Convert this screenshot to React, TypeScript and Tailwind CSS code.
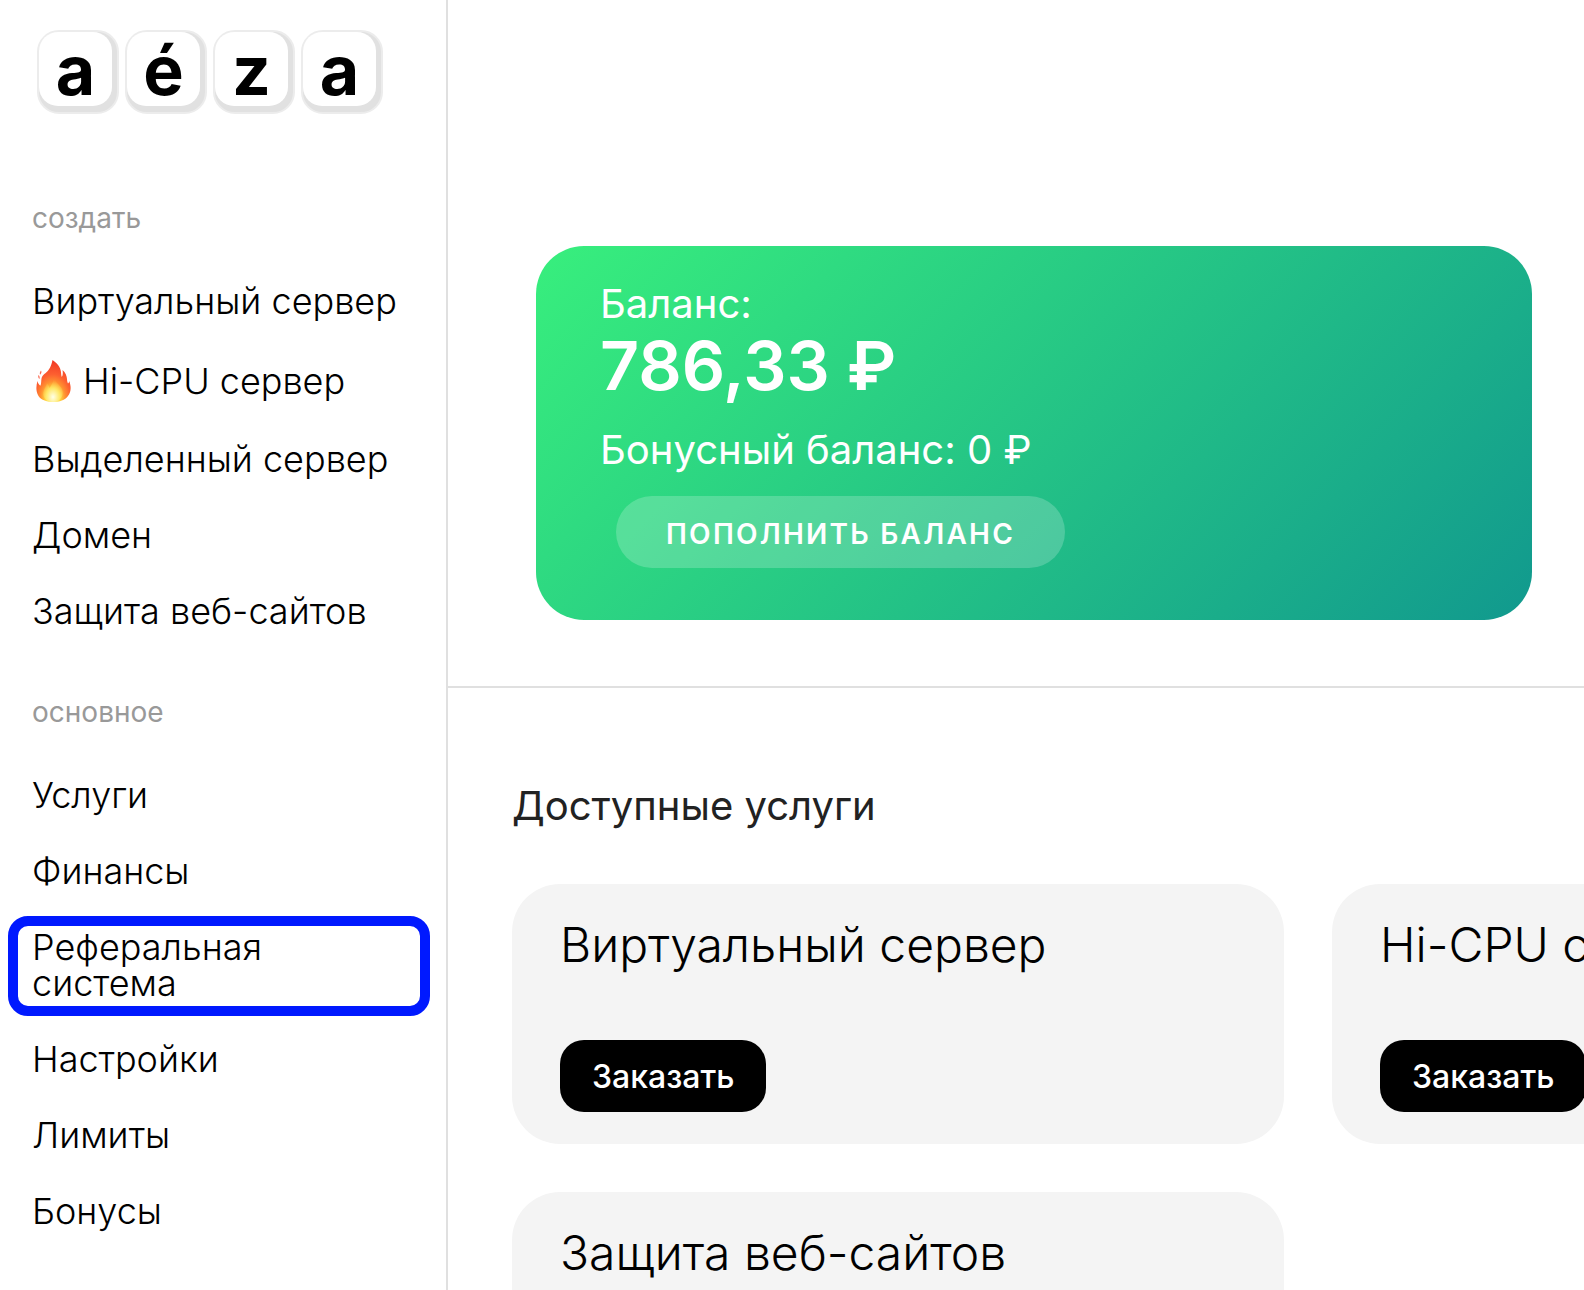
const createLinks = [
    { title: "Виртуальный сервер" },
    { title: "Hi-CPU сервер", hot: true },
    { title: "Выделенный сервер" },
    { title: "Домен" },
    { title: "Защита веб-сайтов" },
];

const services = ["Виртуальный сервер", "Hi-CPU сервер", "Защита веб-сайтов"];

function Logo() {
    return (
        <a href="#" className="flex gap-[6px] ml-[5px]">
            {["a", "é", "z", "a"].map((letter, i) => (
                <span
                    key={i}
                    className="w-[82px] h-[84px] rounded-[22px] border-2 border-[#ececec] bg-[#e1e1e1]"
                >
                    <span className="flex items-center justify-center w-[73px] h-[74px] rounded-[19px] bg-white pt-[2px] text-[68px] leading-[72px] font-bold">
                        {letter}
                    </span>
                </span>
            ))}
        </a>
    );
}

function Fire() {
    return (
        <svg
            viewBox="0 0 35 42"
            className="w-[35px] h-[42px] mt-px ml-1 mr-3 shrink-0"
            aria-hidden="true"
        >
            <defs>
                <radialGradient
                    id="flame"
                    gradientUnits="userSpaceOnUse"
                    cx="17"
                    cy="38"
                    r="36"
                    gradientTransform="translate(4 0) scale(.76 1)"
                >
                    <stop offset="0" stopColor="#fffde0" />
                    <stop offset=".12" stopColor="#fff59a" />
                    <stop offset=".28" stopColor="#ffd23c" />
                    <stop offset=".45" stopColor="#ff9030" />
                    <stop offset=".66" stopColor="#fd5f30" />
                    <stop offset="1" stopColor="#f23c26" />
                </radialGradient>
                <radialGradient id="core" cx=".5" cy=".8" r=".7">
                    <stop offset="0" stopColor="#ffffe8" />
                    <stop offset=".5" stopColor="#ffe868" />
                    <stop offset="1" stopColor="#ffb040" stopOpacity="0" />
                </radialGradient>
            </defs>
            <path
                fill="url(#flame)"
                d="M16.5 0C21 3 24.5 7 25 12c.2 2 .2 3.500 .8 5C27 15 27 12.500 26.500 10c3 2.500 4.300 6 4.500 9 .1 2 .4 3.400 1 4.500.8-.6 1.100-1.400 1.200-2.500C35.500 27 35 32 32 36c-3 4-8.500 6-14.500 6S5 40 2.500 36C-.3 31.500 0 26 1.500 21c.5 2 1.300 3.500 2.800 4.800 1.200-2 .7-4.800 1.200-7.300C6.300 14.500 10 13.500 12.500 10c2.300-3.200 3.200-6 4-10Z"
            />
            <path
                fill="url(#core)"
                d="M18 17c1 5 6 8 8 12 2.500 5.500-1 13-9 13S5.500 35.500 8 30c1-2.500 2-4 3-7 1.500 2 2 3.500 2.500 5 2-3 4-6 4.500-11Z"
            />
            <path
                fill="#fb6a52"
                d="M5 10.500c.8 1.500.5 3-1 4.200-.5-1.600 0-3 1-4.200ZM2.500 15c1 1 1.600 2.500 1 4-1.200-1-1.700-2.500-1-4Z"
            />
        </svg>
    );
}

function Sidebar() {
    return (
        <aside className="w-[448px] shrink-0 border-r-2 border-[#e0e0e0] px-8 pt-[30px]">
            <Logo />
            <nav className="text-[36px] leading-9 font-light">
                <h2 className="mt-[90px] mb-[51px] text-[28px] leading-7 font-normal text-[#999]">
                    создать
                </h2>
                <ul className="grid gap-10">
                    {createLinks.map((link) => (
                        <li key={link.title}>
                            {link.hot ? (
                                <a href="#" className="flex h-[42px]">
                                    <Fire />
                                    <span className="pt-1">{link.title}</span>
                                </a>
                            ) : (
                                <a href="#" className="block whitespace-nowrap">
                                    {link.title}
                                </a>
                            )}
                        </li>
                    ))}
                </ul>

                <h2 className="mt-[69px] mb-[51px] text-[28px] leading-7 font-normal text-[#999]">
                    основное
                </h2>
                <ul className="grid gap-10">
                    <li>
                        <a href="#" className="block">Услуги</a>
                    </li>
                    <li>
                        <a href="#" className="block">Финансы</a>
                    </li>
                    <li className="relative">
                        <a href="#" className="block">
                            Реферальная
                            <br />
                            система
                        </a>
                        <span className="absolute -left-6 -right-4 -top-[13px] -bottom-[15px] rounded-[20px] border-[10px] border-[#0019ff] pointer-events-none" />
                    </li>
                    <li>
                        <a href="#" className="block">Настройки</a>
                    </li>
                    <li>
                        <a href="#" className="block">Лимиты</a>
                    </li>
                    <li>
                        <a href="#" className="block">Бонусы</a>
                    </li>
                </ul>
            </nav>
        </aside>
    );
}

function Balance() {
    return (
        <section className="border-b-2 border-[#e0e0e0] pt-[246px] pb-[66px] pl-[88px] pr-[52px]">
            <div className="rounded-[48px] bg-[linear-gradient(135deg,#38ef7d,#11998e)] px-16 pt-[34px] pb-[52px] text-white">
                <p className="text-[40px] leading-[48px]">Баланс:</p>
                <p className="text-[68px] leading-[74px] font-semibold">
                    786,33 ₽
                </p>
                <p className="mt-6 text-[40px] leading-[48px]">
                    Бонусный баланс: 0 ₽
                </p>
                <button
                    type="button"
                    className="block mt-[22px] ml-4 h-[72px] rounded-full bg-white/20 px-[50px] pt-1 text-[28px] leading-7 font-semibold tracking-[0.08em] uppercase"
                >
                    Пополнить баланс
                </button>
            </div>
        </section>
    );
}

function Services() {
    return (
        <section className="px-16 pt-[94px]">
            <h2 className="text-[40px] leading-[48px] text-[#222]">
                Доступные услуги
            </h2>
            <div className="mt-[54px] grid grid-cols-[repeat(2,772px)] gap-12">
                {services.map((title) => (
                    <article
                        key={title}
                        className="rounded-[48px] bg-[#f4f4f4] px-12 pt-8 pb-8"
                    >
                        <h3 className="text-[48px] leading-[58px] font-light">
                            {title}
                        </h3>
                        <button
                            type="button"
                            className="mt-[66px] block h-[72px] rounded-3xl bg-black px-8 pt-[2px] text-[32px] leading-8 font-medium text-white"
                        >
                            Заказать
                        </button>
                    </article>
                ))}
            </div>
        </section>
    );
}

export default function App() {
    return (
        <div className="flex h-screen overflow-hidden bg-white font-['Inter',sans-serif] text-black">
            <Sidebar />
            <main className="flex-1 min-w-0">
                <Balance />
                <Services />
            </main>
        </div>
    );
}
